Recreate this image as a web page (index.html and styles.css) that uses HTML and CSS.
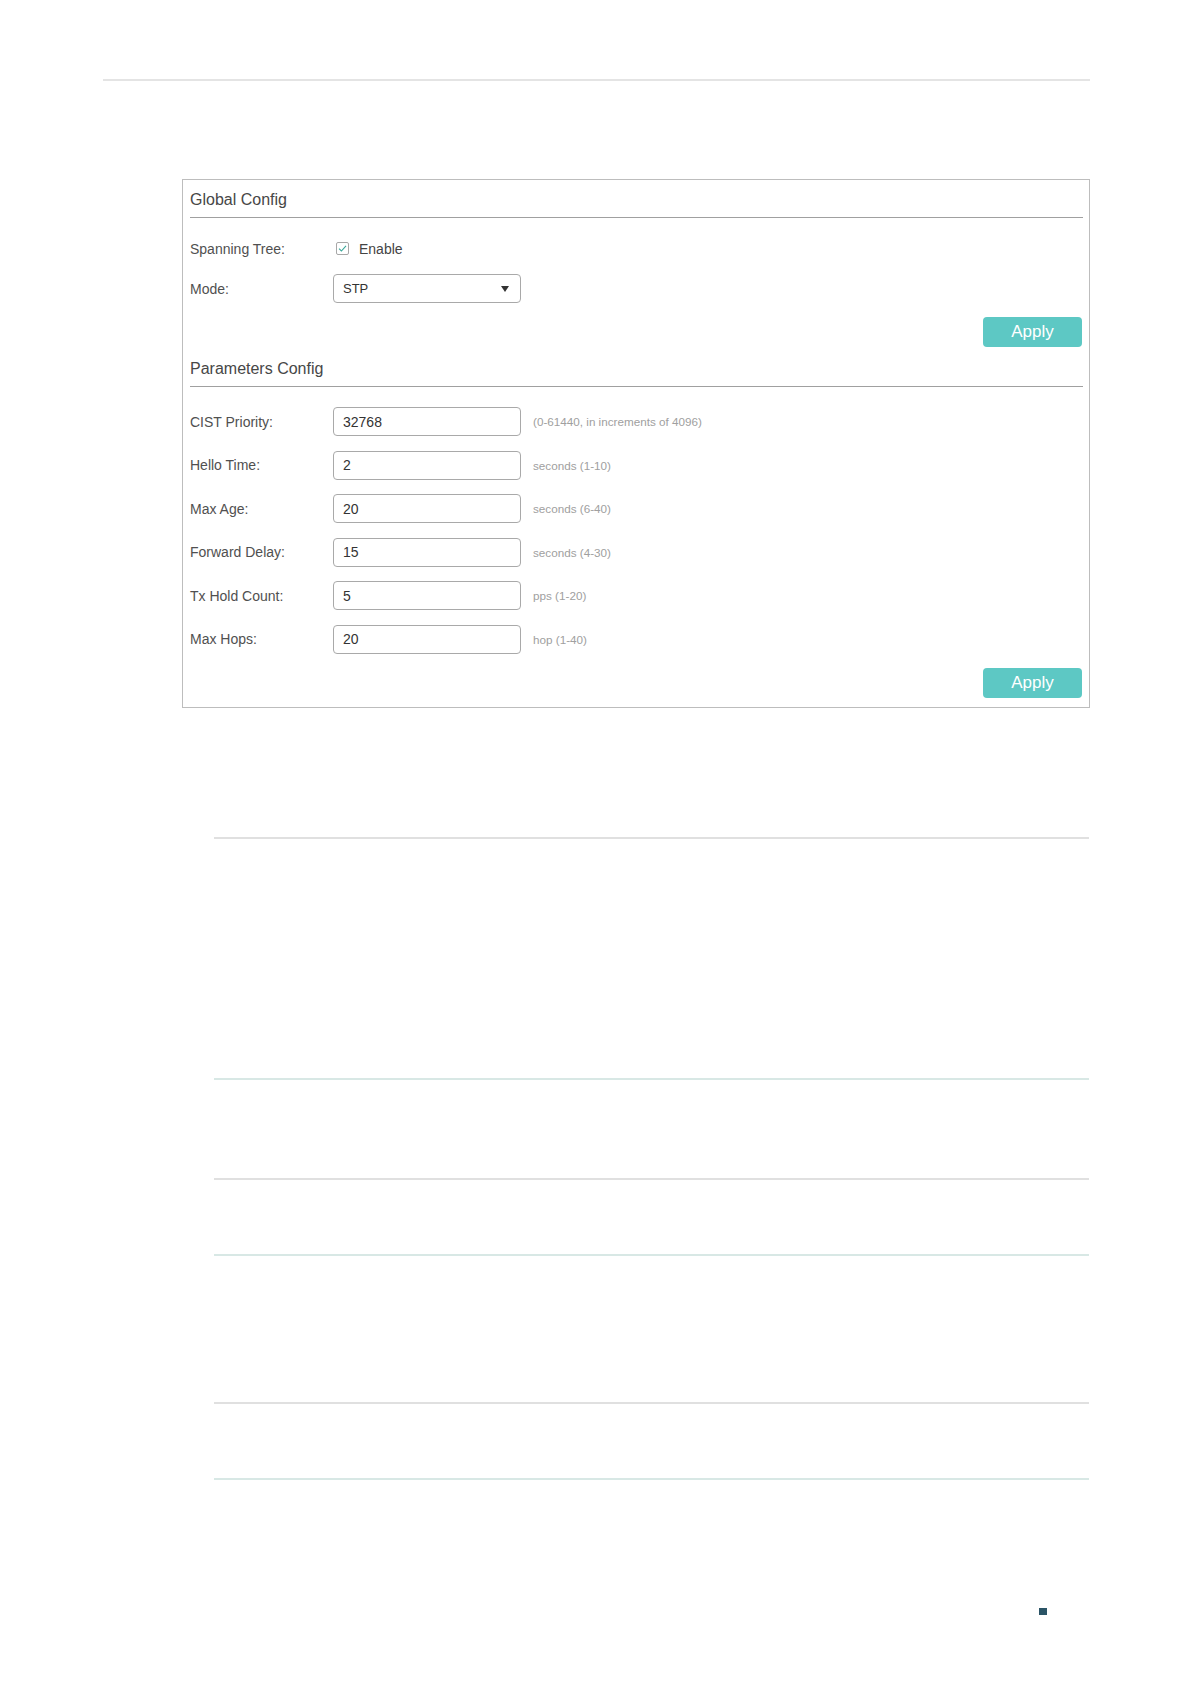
FILE: index.html
```html
<!DOCTYPE html>
<html lang="en">
<head>
<meta charset="utf-8">
<title>Spanning Tree Config</title>
<link rel="stylesheet" href="styles.css">
</head>
<body>
<div class="page">
  <div class="top-rule"></div>

  <section class="panel">
    <div class="section-title">Global Config</div>
    <div class="form form-global">
      <div class="row">
        <span class="label">Spanning Tree:</span>
        <label class="check">
          <span class="box">
            <svg width="11" height="11" viewBox="0 0 11 11"><path d="M2 5.6 L4.4 8 L9 2.8" fill="none" stroke="#3aa89a" stroke-width="1.1"/></svg>
          </span>
          <span class="check-text">Enable</span>
        </label>
      </div>
      <div class="row">
        <span class="label">Mode:</span>
        <div class="select"><span>STP</span><span class="caret"></span></div>
      </div>
    </div>
    <div class="actions"><button class="btn">Apply</button></div>

    <div class="section-title section-title-2">Parameters Config</div>
    <div class="form form-params">
      <div class="row">
        <span class="label">CIST Priority:</span>
        <input class="field" type="text" value="32768">
        <span class="hint">(0-61440, in increments of 4096)</span>
      </div>
      <div class="row">
        <span class="label">Hello Time:</span>
        <input class="field" type="text" value="2">
        <span class="hint">seconds (1-10)</span>
      </div>
      <div class="row">
        <span class="label">Max Age:</span>
        <input class="field" type="text" value="20">
        <span class="hint">seconds (6-40)</span>
      </div>
      <div class="row">
        <span class="label">Forward Delay:</span>
        <input class="field" type="text" value="15">
        <span class="hint">seconds (4-30)</span>
      </div>
      <div class="row">
        <span class="label">Tx Hold Count:</span>
        <input class="field" type="text" value="5">
        <span class="hint">pps (1-20)</span>
      </div>
      <div class="row">
        <span class="label">Max Hops:</span>
        <input class="field" type="text" value="20">
        <span class="hint">hop (1-40)</span>
      </div>
    </div>
    <div class="actions actions-2"><button class="btn">Apply</button></div>
  </section>

  <div class="doc-tables">
    <div class="doc-table doc-table-1"></div>
    <div class="doc-table doc-table-2"></div>
    <div class="doc-table doc-table-3"></div>
  </div>

  <footer class="page-foot"><span class="foot-mark"></span></footer>
</div>
</body>
</html>
```

FILE: styles.css
```css
* { box-sizing: border-box; }

html, body {
  margin: 0;
  padding: 0;
  background: #ffffff;
}

body {
  font-family: "Liberation Sans", Arial, sans-serif;
  color: #333333;
}

.page {
  width: 1191px;
  min-height: 1684px;
  padding-top: 79px;
}

.top-rule {
  margin-left: 103px;
  width: 987px;
  height: 2px;
  background: #e4e4e4;
}

.panel {
  margin-top: 98px;
  margin-left: 182px;
  width: 908px;
  border: 1px solid #bdbdbd;
  padding: 9px 6px 9px 7px;
}

.section-title {
  font-size: 16px;
  line-height: 22px;
  color: #474747;
  padding-bottom: 6px;
  border-bottom: 1px solid #a0a0a0;
}

.section-title-2 {
  margin-top: 11px;
}

.form {
  display: flex;
  flex-direction: column;
}

.form-global {
  margin-top: 16px;
  gap: 11px;
}

.form-params {
  margin-top: 20px;
  gap: 14.6px;
}

.row {
  display: flex;
  align-items: center;
  height: 29px;
}

.label {
  width: 143px;
  flex: none;
  font-size: 14px;
  color: #505050;
}

.check {
  display: flex;
  align-items: center;
  margin-left: 3px;
}

.box {
  width: 13px;
  height: 13px;
  border: 1px solid #a8a8a8;
  border-radius: 2px;
  display: flex;
  align-items: center;
  justify-content: center;
}

.check-text {
  margin-left: 10px;
  font-size: 14px;
  color: #444444;
}

.select {
  width: 188px;
  height: 29px;
  border: 1px solid #a9a9a9;
  border-radius: 4px;
  display: flex;
  align-items: center;
  justify-content: space-between;
  padding: 0 11px 0 9px;
  font-size: 13px;
  color: #333333;
}

.caret {
  width: 0;
  height: 0;
  border-left: 4.5px solid transparent;
  border-right: 4.5px solid transparent;
  border-top: 6px solid #333333;
}

.field {
  width: 188px;
  height: 29px;
  flex: none;
  border: 1px solid #a9a9a9;
  border-radius: 4px;
  padding: 0 9px;
  font-family: "Liberation Sans", Arial, sans-serif;
  font-size: 14px;
  color: #333333;
  background: #ffffff;
  outline: none;
}

.hint {
  margin-left: 12px;
  font-size: 11.7px;
  color: #a0a0a0;
}

.actions {
  display: flex;
  justify-content: flex-end;
  margin-top: 14px;
}

.btn {
  width: 99px;
  height: 30px;
  border: none;
  border-radius: 4px;
  background: #5dc8c4;
  color: #ffffff;
  font-family: "Liberation Sans", Arial, sans-serif;
  font-size: 17px;
  padding: 0;
  margin-right: 1px;
}

.doc-tables {
  margin-top: 129px;
  margin-left: 214px;
  width: 875px;
}

.doc-table {
  border-top: 2px solid #e0e0e0;
  border-bottom: 2px solid #d8e8e5;
}

.doc-table-1 { height: 243px; }
.doc-table-2 { height: 78px; margin-top: 98px; }
.doc-table-3 { height: 78px; margin-top: 146px; }

.page-foot {
  margin-top: 128px;
  padding-left: 1039px;
  display: flex;
}

.foot-mark {
  width: 8px;
  height: 7px;
  background: #2b5466;
}
```
